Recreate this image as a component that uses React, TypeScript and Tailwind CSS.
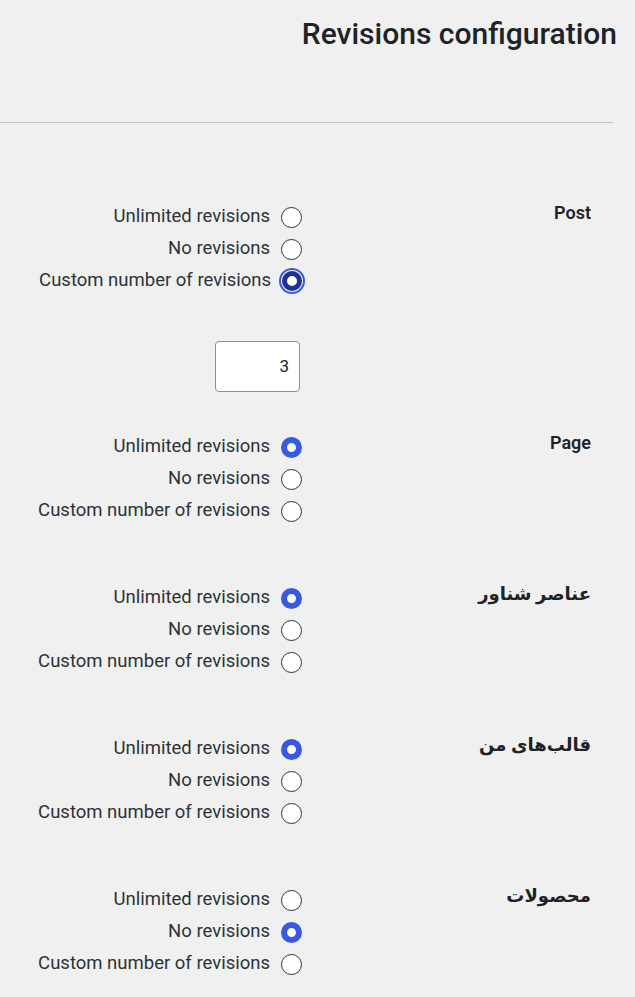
import React from 'react';

type Option = 'unlimited' | 'none' | 'custom';

const sections: { title: string; value: Option; focused?: boolean; custom?: string }[] = [
  { title: 'Post', value: 'custom', focused: true, custom: '3' },
  { title: 'Page', value: 'unlimited' },
  { title: 'عناصر شناور', value: 'unlimited' },
  { title: 'قالب‌های من', value: 'unlimited' },
  { title: 'محصولات', value: 'none' },
];

const options: { key: Option; label: string }[] = [
  { key: 'unlimited', label: 'Unlimited revisions' },
  { key: 'none', label: 'No revisions' },
  { key: 'custom', label: 'Custom number of revisions' },
];

const Radio: React.FC<{ checked: boolean; focused?: boolean }> = ({ checked, focused }) => {
  if (checked && focused) {
    return (
      <span className="w-[20px] h-[20px] rounded-full bg-white border-[5px] border-[#1f3199] shadow-[0_0_0_1px_#f0f0f1,0_0_0_3px_#3858e9] shrink-0" />
    );
  }
  if (checked) {
    return <span className="w-[21px] h-[21px] rounded-full bg-white border-[6px] border-[#3858e9] shrink-0" />;
  }
  return <span className="w-[21px] h-[21px] rounded-full bg-white border border-[#2c3338] shrink-0" />;
};

export default function App() {
  return (
    <div
      dir="rtl"
      className="min-h-[997px] bg-[#f0f0f1] text-[#2c3338] overflow-hidden"
      style={{ fontFamily: 'Roboto, "DejaVu Sans", sans-serif' }}
    >
      {/* Heading */}
      <div className="pr-[18px] pt-[14px]">
        <h1 className="text-[30px] font-medium leading-[40px] text-[#1d2327]">Revisions configuration</h1>
      </div>

      <div className="mr-[22px] mt-[68px] border-t border-[#c3c4c7]" />

      {/* Settings table */}
      <div className="mr-[22px] pt-[78px]">
        {sections.map((s, i) => (
          <div key={i} className={`flex ${i === 0 ? '' : s.title === 'Page' ? 'mt-[39px]' : 'mt-[55px]'}`}>
            <div className="w-[311px] shrink-0 pr-[22px] text-[18px] font-semibold leading-[24px] text-[#1d2327]">
              {s.title}
            </div>
            <div className="flex flex-col items-start">
              {options.map((o) => (
                <label key={o.key} className="h-[32px] flex items-center gap-[11px] text-[18.5px] whitespace-nowrap">
                  <Radio checked={s.value === o.key} focused={s.focused} />
                  <span>{o.label}</span>
                </label>
              ))}
              {s.custom && (
                <div className="mt-[44px] mr-[2px]">
                  <div className="w-[85px] h-[51px] bg-white border border-[#8c8f94] rounded-[4px] flex items-center justify-start pr-[10px] text-[17px] text-[#1d2327]">
                    {s.custom}
                  </div>
                </div>
              )}
            </div>
          </div>
        ))}
      </div>
    </div>
  );
}
